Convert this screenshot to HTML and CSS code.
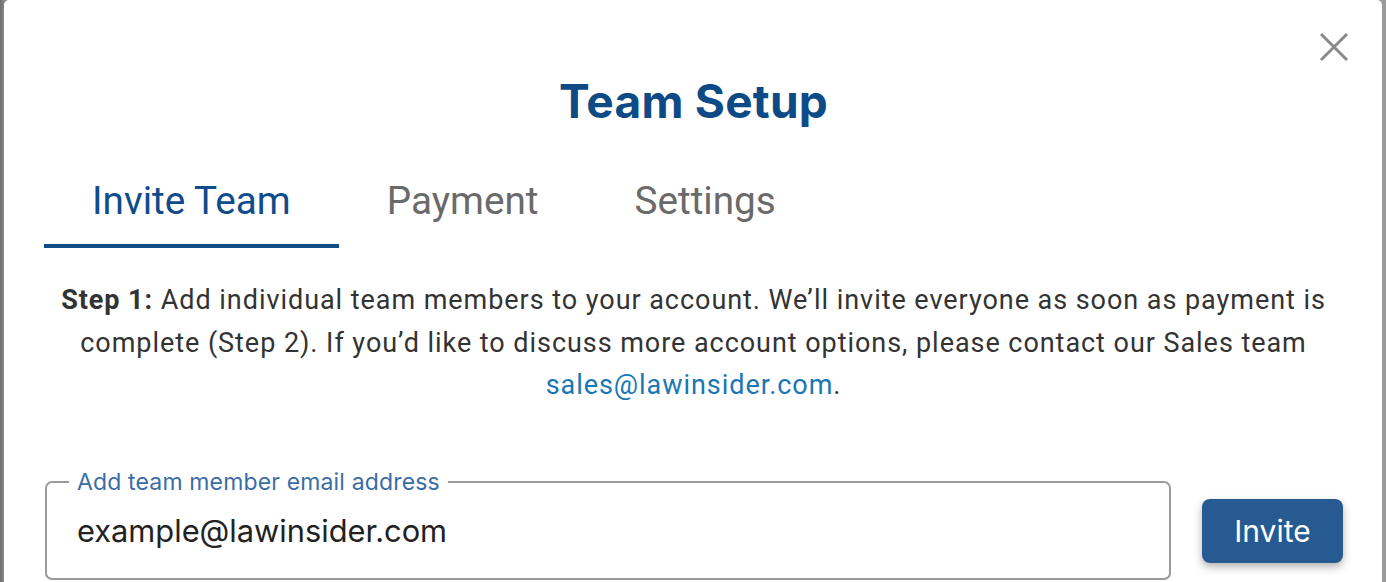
FILE: index.html
```html
<!DOCTYPE html>
<html lang="en">
<head>
<meta charset="utf-8">
<title>Team Setup</title>
<link rel="stylesheet" href="styles.css">
</head>
<body>
<div class="backdrop">
  <div class="modal">
    <button class="close" aria-label="Close">
      <svg width="30" height="30" viewBox="0 0 30 30"><path d="M2 2 L28 28 M28 2 L2 28" stroke="#8a8a8a" stroke-width="3" fill="none"/></svg>
    </button>
    <h1 class="title">Team Setup</h1>
    <nav class="tabs">
      <div class="tab active">Invite Team</div>
      <div class="tab">Payment</div>
      <div class="tab">Settings</div>
    </nav>
    <p class="intro"><strong>Step 1:</strong> Add individual team members to your account. We’ll invite everyone as soon as payment is complete (Step 2). If you’d like to discuss more account options, please contact our Sales team <a href="#" class="link">sales@lawinsider.com</a>.</p>
    <div class="invite-row">
      <fieldset class="field">
        <legend class="field-label">Add team member email address</legend>
        <div class="field-value">example@lawinsider.com</div>
      </fieldset>
      <button class="invite-btn">Invite</button>
    </div>
  </div>
</div>
</body>
</html>
```
FILE: styles.css
```css
html, body {
  margin: 0;
  padding: 0;
  height: 100%;
  overflow: hidden;
}
body {
  background: #8f8f8f;
}
.backdrop {
  display: flex;
  height: 100%;
  padding: 0 4px;
  background: linear-gradient(90deg, #6e6e6e 0, #8a8a8a 4px, #9a9a9a 100%);
}
.modal {
  position: relative;
  flex: 1;
  background: #ffffff;
  border-radius: 5px 5px 0 0;
  padding: 0 39px 0 40px;
  height: 700px;
  font-family: Roboto, "Liberation Sans", sans-serif;
}
.close {
  position: absolute;
  top: 32px;
  right: 33px;
  width: 30px;
  height: 30px;
  padding: 0;
  border: 0;
  background: transparent;
  display: flex;
}
.title {
  margin: 0;
  padding-top: 74px;
  line-height: 54px;
  font-family: Inter, "Liberation Sans", sans-serif;
  font-weight: 700;
  font-size: 46px;
  color: #0d4a86;
  text-align: center;
  letter-spacing: 0.25px;
}
.tabs {
  display: flex;
  margin-top: 50px;
}
.tab {
  padding: 0 48px 20px;
  line-height: 46px;
  font-size: 38.7px;
  color: #6a6a6a;
  border-bottom: 4px solid transparent;
}
.tab.active {
  color: #104c8b;
  border-bottom-color: #0f4b87;
}
.intro {
  margin: 31px 0 0;
  text-align: center;
  font-size: 27px;
  letter-spacing: 0.95px;
  line-height: 42.5px;
  color: #333333;
}
.intro strong {
  font-weight: 700;
}
.link {
  color: #1877b4;
  text-decoration: none;
}
.invite-row {
  display: flex;
  align-items: flex-end;
  gap: 31px;
  margin-top: 62px;
}
.field {
  flex: 1;
  margin: 0 0 0 1px;
  border: 2px solid #9a9a9a;
  border-radius: 7px;
  padding: 18px 22px 29px;
  font-family: Inter, "Liberation Sans", sans-serif;
}
.field-label {
  padding: 0 8px;
  font-size: 23px;
  letter-spacing: 0.15px;
  line-height: 26px;
  color: #3a6da5;
}
.field-value {
  padding: 0 8px;
  font-size: 30.8px;
  line-height: 36px;
  color: #222222;
}
.invite-btn {
  width: 141px;
  height: 64px;
  margin-bottom: 17px;
  border: 0;
  border-radius: 8px;
  background: #265a91;
  color: #ffffff;
  font-family: Inter, "Liberation Sans", sans-serif;
  font-size: 30px;
  box-shadow: 0 4px 8px rgba(0, 0, 0, 0.3);
}
```
